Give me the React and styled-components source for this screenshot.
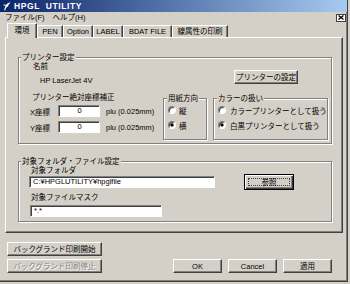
import React from 'react';
import styled, { createGlobalStyle } from 'styled-components';

const Global = createGlobalStyle`
  html, body { margin: 0; padding: 0; background: #d4d0c8; }
  body {
    font-family: "Liberation Sans", "Noto Sans CJK JP", sans-serif;
    font-size: 7.5px;
    color: #000;
  }
  * { box-sizing: border-box; }
`;

const Window = styled.div`
  width: 348px;
  height: 282px;
  background: #d4d0c8;
  border-right: 1px solid #404040;
  border-bottom: 1px solid #404040;
  box-shadow: inset -1px -1px 0 #808080;
  display: flex;
  flex-direction: column;
`;

const TitleBar = styled.div`
  height: 12px;
  background: linear-gradient(to right, #0a246a, #a6caf0);
  display: flex;
  align-items: center;
  gap: 3px;
  padding-left: 3px;
  color: #fff;
  font-weight: bold;
  font-size: 8.5px;
  letter-spacing: 0.6px;
  line-height: 12px;
  white-space: pre;
`;

const MenuBar = styled.div`
  height: 11px;
  display: flex;
  align-items: center;
  padding: 0 1px 0 5px;
  gap: 8px;
  line-height: 11px;
`;

const MenuItem = styled.span``;

const CloseBox = styled.div`
  margin-left: auto;
  width: 10px;
  height: 8px;
  background: #fff;
  border: 1px solid #404040;
  display: flex;
  align-items: center;
  justify-content: center;
`;

const TabStrip = styled.div`
  height: 14px;
  display: flex;
  align-items: flex-end;
  padding-left: 7px;
  position: relative;
  z-index: 1;
`;

const Tab = styled.div`
  width: ${p => p.$w}px;
  height: ${p => (p.$active ? 15 : 12)}px;
  margin-bottom: ${p => (p.$active ? -1 : 0)}px;
  background: #d4d0c8;
  border-top: 1px solid #fff;
  border-left: 1px solid #fff;
  border-right: 1px solid #404040;
  box-shadow: inset -1px 0 0 #808080;
  display: flex;
  justify-content: center;
  align-items: ${p => (p.$active ? 'flex-start' : 'center')};
  line-height: ${p => (p.$active ? '13px' : '11px')};
  white-space: nowrap;
`;

const Panel = styled.div`
  margin-left: 5px;
  width: 338px;
  height: 196px;
  border-top: 1px solid #fff;
  border-left: 1px solid #fff;
  border-right: 1px solid #404040;
  border-bottom: 1px solid #404040;
  box-shadow: inset -1px -1px 0 #808080;
  padding: 19px 10px 0 12px;
  display: flex;
  flex-direction: column;
`;

const GroupBox = styled.div`
  border: 1px solid #808080;
  box-shadow: inset 1px 1px 0 #fff, 1px 1px 0 #fff;
  display: flex;
  flex-direction: column;
  flex-shrink: 0;
  width: ${p => (p.$w ? `${p.$w}px` : 'auto')};
  height: ${p => p.$h}px;
  margin-top: ${p => p.$mt || 0}px;
  margin-left: ${p => p.$ml || 0}px;
`;

const GroupTitle = styled.div`
  align-self: flex-start;
  margin: -5px 0 0 ${p => (p.$ml ?? 2)}px;
  padding: 0 1px;
  background: #d4d0c8;
  line-height: 9px;
  height: 9px;
  white-space: nowrap;
`;

const Text = styled.div`
  line-height: 9px;
  height: 9px;
  white-space: nowrap;
  margin-left: ${p => p.$ml || 0}px;
  margin-top: ${p => p.$mt || 0}px;
`;

const Row = styled.div`
  display: flex;
  align-items: ${p => p.$align || 'flex-start'};
  margin-top: ${p => p.$mt || 0}px;
  margin-left: ${p => p.$ml || 0}px;
`;

const NameCol = styled.div`
  display: flex;
  flex-direction: column;
  padding-left: 14px;
`;

const LeftBlock = styled.div`
  width: 144px;
  flex-shrink: 0;
  padding-left: 11px;
  display: flex;
  flex-direction: column;
`;

const CoordRow = styled.div`
  display: flex;
  align-items: center;
  height: 12px;
  margin-top: ${p => p.$mt}px;
`;

const CoordLabel = styled.span`
  width: 28px;
  white-space: nowrap;
`;

const Unit = styled.span`
  margin-left: 6px;
  white-space: nowrap;
`;

const TextBox = styled.div`
  width: ${p => p.$w}px;
  height: 12px;
  margin-left: ${p => p.$ml || 0}px;
  margin-top: ${p => p.$mt || 0}px;
  background: #fff;
  border: 1px solid;
  border-color: #808080 #fff #fff #808080;
  box-shadow: inset 1px 1px 0 #404040;
  padding: 0 2px 0 3px;
  display: flex;
  align-items: center;
  justify-content: ${p => (p.$center ? 'center' : 'flex-start')};
  line-height: 10px;
  white-space: nowrap;
  overflow: hidden;
  flex-shrink: 0;
`;

const RadioRow = styled.div`
  display: flex;
  align-items: center;
  height: 10px;
  padding-left: 4px;
  gap: ${p => p.$gap || 3}px;
  margin-top: ${p => p.$mt}px;
  white-space: nowrap;
`;

const RadioCircle = styled.span`
  width: 8px;
  height: 8px;
  border-radius: 50%;
  flex-shrink: 0;
  border: 1px solid;
  border-color: #808080 #fff #fff #808080;
  box-shadow: inset 1px 1px 0 #404040;
  background: ${p =>
    p.$checked ? 'radial-gradient(circle, #000 0 1.4px, #fff 1.8px)' : '#fff'};
`;

const Button = styled.button`
  width: ${p => p.$w}px;
  height: ${p => p.$h || 14}px;
  padding: 0;
  margin: 0;
  margin-left: ${p => p.$ml || 0}px;
  margin-top: ${p => p.$mt || 0}px;
  font: inherit;
  font-size: 7.5px;
  line-height: 9px;
  background: #d4d0c8;
  color: ${p => (p.disabled ? '#808080' : '#000')};
  text-shadow: ${p => (p.disabled ? '1px 1px 0 #fff' : 'none')};
  border: 1px solid;
  border-color: #fff #404040 #404040 #fff;
  box-shadow: inset -1px -1px 0 #808080;
  display: flex;
  align-items: center;
  justify-content: center;
  white-space: nowrap;
  flex-shrink: 0;
`;

const DefaultButton = styled(Button)`
  border: 1px solid #000;
  box-shadow: inset 1px 1px 0 #fff, inset -1px -1px 0 #404040,
    inset -2px -2px 0 #808080;
  padding: 3px;
`;

const FocusRect = styled.span`
  flex: 1;
  align-self: stretch;
  border: 1px dotted #404040;
  display: flex;
  align-items: center;
  justify-content: center;
`;

const Footer = styled.div`
  display: flex;
  justify-content: space-between;
  padding: 9px 15px 0 7px;
`;

const Column = styled.div`
  display: flex;
  flex-direction: column;
  gap: 3px;
`;

const ButtonRow = styled.div`
  display: flex;
  gap: 6px;
  align-self: flex-end;
`;

const tabs = [
  { label: '環境', w: 30, active: true },
  { label: 'PEN', w: 26 },
  { label: 'Option', w: 30 },
  { label: 'LABEL', w: 30 },
  { label: 'BDAT FILE', w: 49 },
  { label: '線属性の印刷', w: 56 },
];

export default function App() {
  return (
    <>
      <Global />
      <Window>
        <TitleBar>
          <svg width="8" height="9" viewBox="0 0 8 9">
            <path d="M7.5 0.3 C4.5 0.8 2 3 1.2 8.6 L2.2 8.6 C2.6 6.8 3.2 5.6 4 4.8 L5.6 4.6 L4.8 3.9 C5.6 2.8 6.6 1.6 7.5 0.3 Z" fill="#fff" />
            <path d="M0.5 3 L3 3.2" stroke="#fff" strokeWidth="1" />
          </svg>
          <span>HPGL  UTILITY</span>
        </TitleBar>
        <MenuBar>
          <MenuItem>ファイル(F)</MenuItem>
          <MenuItem>ヘルプ(H)</MenuItem>
          <CloseBox>
            <svg width="6" height="5" viewBox="0 0 6 5">
              <path d="M0.5 0.5 L5.5 4.5 M5.5 0.5 L0.5 4.5" stroke="#000" strokeWidth="1.3" />
            </svg>
          </CloseBox>
        </MenuBar>
        <TabStrip>
          {tabs.map(t => (
            <Tab key={t.label} $w={t.w} $active={t.active}>
              {t.label}
            </Tab>
          ))}
        </TabStrip>
        <Panel>
          <GroupBox $h={87}>
            <GroupTitle>プリンター設定</GroupTitle>
            <Row>
              <NameCol>
                <Text>名前</Text>
                <Text $mt={5} $ml={7}>HP LaserJet 4V</Text>
              </NameCol>
              <Button $w={64} $mt={8} style={{ marginLeft: 'auto', marginRight: 33 }}>
                プリンターの設定
              </Button>
            </Row>
            <Row $mt={8}>
              <LeftBlock>
                <Text $ml={2}>プリンター絶対座標補正</Text>
                <CoordRow $mt={3}>
                  <CoordLabel>X座標</CoordLabel>
                  <TextBox $w={42} $center>0</TextBox>
                  <Unit>plu (0.025mm)</Unit>
                </CoordRow>
                <CoordRow $mt={4}>
                  <CoordLabel>Y座標</CoordLabel>
                  <TextBox $w={42} $center>0</TextBox>
                  <Unit>plu (0.025mm)</Unit>
                </CoordRow>
              </LeftBlock>
              <GroupBox $w={44} $h={42} $mt={5}>
                <GroupTitle $ml={3}>用紙方向</GroupTitle>
                <RadioRow $mt={2}>
                  <RadioCircle />
                  <span>縦</span>
                </RadioRow>
                <RadioRow $mt={5}>
                  <RadioCircle $checked />
                  <span>横</span>
                </RadioRow>
              </GroupBox>
              <GroupBox $w={115} $h={42} $mt={5} $ml={6}>
                <GroupTitle $ml={3}>カラーの扱い</GroupTitle>
                <RadioRow $mt={2} $gap={4}>
                  <RadioCircle />
                  <span>カラープリンターとして扱う</span>
                </RadioRow>
                <RadioRow $mt={5} $gap={4}>
                  <RadioCircle $checked />
                  <span>白黒プリンターとして扱う</span>
                </RadioRow>
              </GroupBox>
            </Row>
          </GroupBox>

          <GroupBox $h={61} $mt={17}>
            <GroupTitle>対象フォルダ・ファイル設定</GroupTitle>
            <Text $ml={12}>対象フォルダ</Text>
            <Row $align="center" $mt={-1}>
              <TextBox $w={186} $ml={10}>C:¥HPGLUTILITY¥hpglfile</TextBox>
              <DefaultButton $w={50} $h={16} $ml={29}>
                <FocusRect>参照</FocusRect>
              </DefaultButton>
            </Row>
            <Text $ml={12} $mt={3}>対象ファイルマスク</Text>
            <TextBox $w={132} $ml={11} $mt={3}>*.*</TextBox>
          </GroupBox>
        </Panel>
        <Footer>
          <Column>
            <Button $w={95}>バックグランド印刷開始</Button>
            <Button $w={95} disabled>バックグランド印刷停止</Button>
          </Column>
          <ButtonRow>
            <Button $w={49}>OK</Button>
            <Button $w={49}>Cancel</Button>
            <Button $w={49}>適用</Button>
          </ButtonRow>
        </Footer>
      </Window>
    </>
  );
}
